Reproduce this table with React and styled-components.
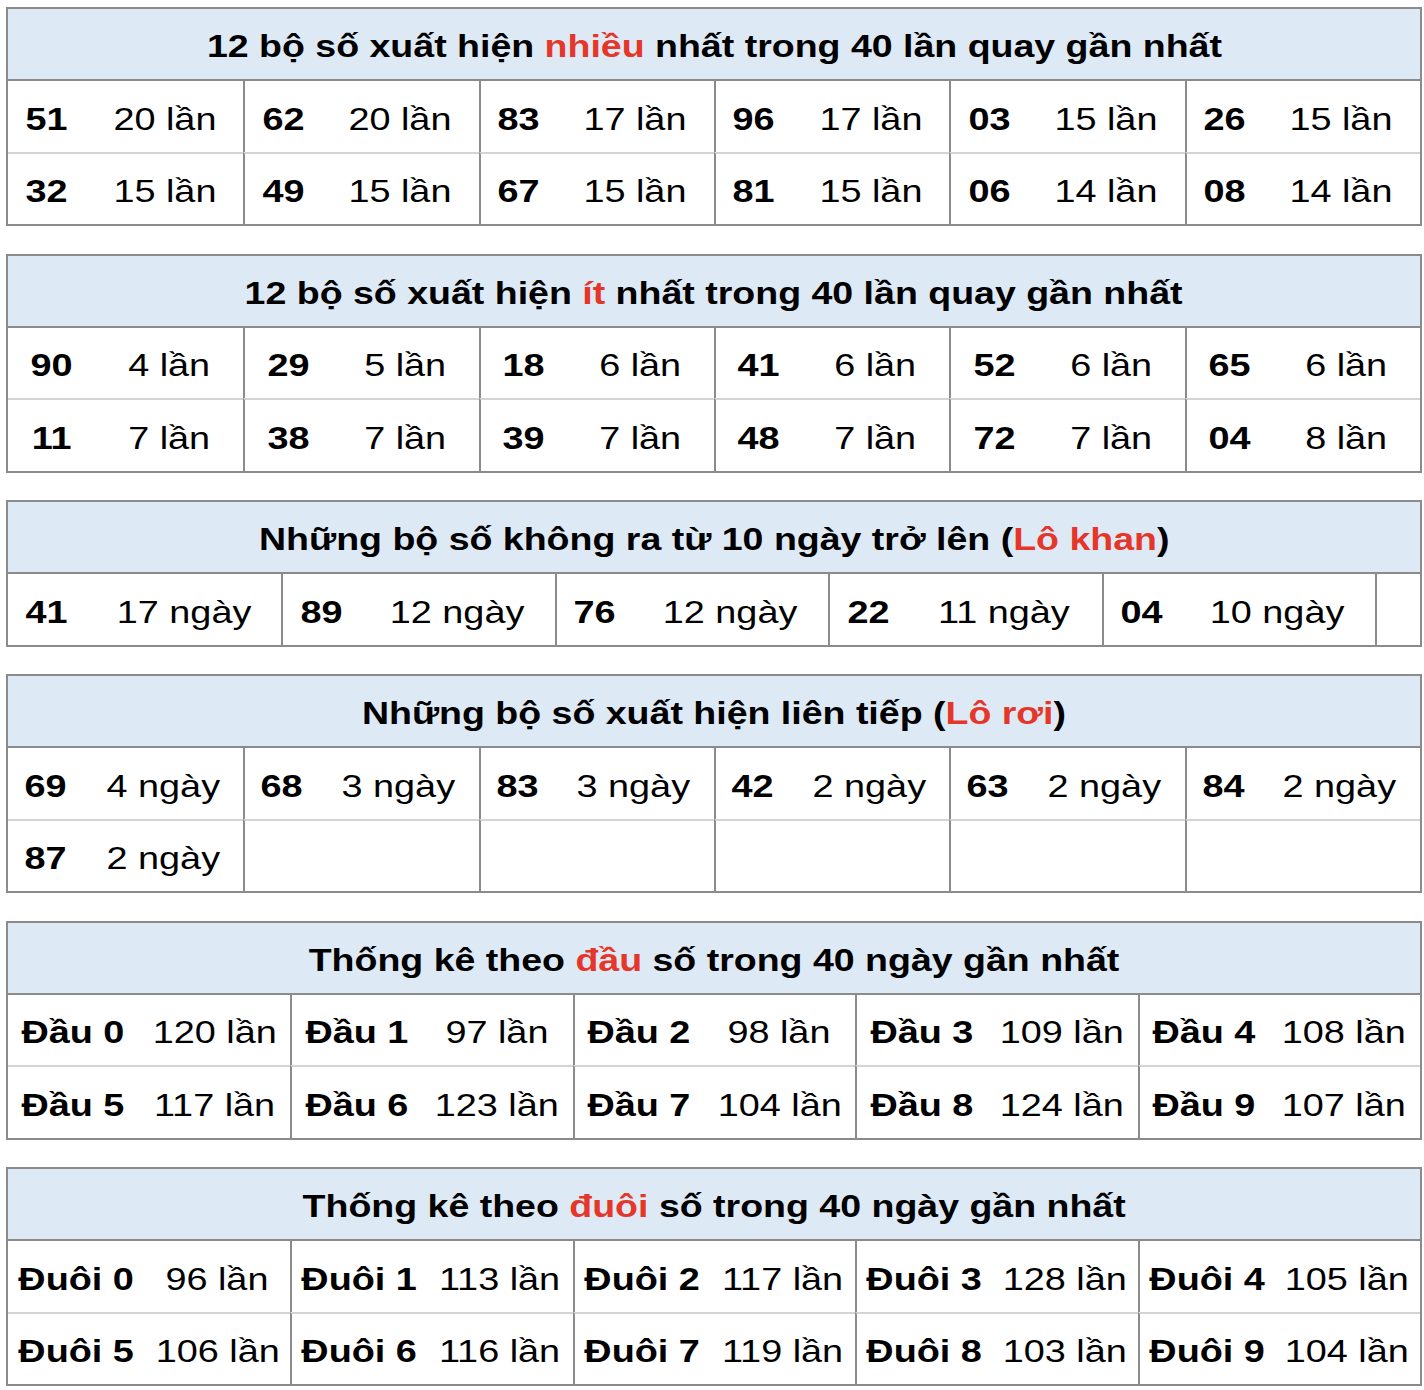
import React from "react";
import styled, { createGlobalStyle } from "styled-components";

const GlobalStyle = createGlobalStyle`
  html, body { margin: 0; padding: 0; background: #ffffff; }
  body {
    font-family: "Liberation Sans", Arial, Helvetica, sans-serif;
    color: #000000;
  }
`;

const Page = styled.div`
  display: flex;
  flex-direction: column;
  gap: 27.5px;
  padding: 7px 2px 4px 6px;
`;

const Table = styled.section`
  border: 2px solid #8b8b8b;
  background: #ffffff;
`;

const Header = styled.div`
  height: 72px;
  box-sizing: border-box;
  padding-top: 6px;
  display: flex;
  align-items: center;
  justify-content: center;
  background: #dde9f5;
  border-bottom: 2px solid #8b8b8b;
  font-size: 31px;
  font-weight: 700;
`;

const Stretch = styled.span`
  display: inline-block;
  white-space: nowrap;
  transform: scaleX(${(p) => p.$scale || 1.2});
  transform-origin: center;
`;

const Hot = styled.span`
  color: #e5362a;
`;

const Grid = styled.div`
  display: grid;
  grid-template-columns: ${(p) => p.$cols};
`;

const Cell = styled.div`
  height: ${(p) => (p.$rowSep ? "72.5px" : "70.5px")};
  padding-top: 6px;
  box-sizing: border-box;
  display: flex;
  align-items: center;
  justify-content: center;
  font-size: 31.5px;
  font-weight: ${(p) => (p.$bold ? 700 : 400)};
  border-left: ${(p) => (p.$divider ? "2px solid #8b8b8b" : "0")};
  border-top: ${(p) => (p.$rowSep ? "2px solid #d4d4d4" : "0")};
`;

const tables = [
  {
    title: ["12 bộ số xuất hiện ", "nhiều", " nhất trong 40 lần quay gần nhất"],
    cols: "repeat(6, 78fr 158fr)",
    pairs: 6,
    rows: [
      [["51", "20 lần"], ["62", "20 lần"], ["83", "17 lần"], ["96", "17 lần"], ["03", "15 lần"], ["26", "15 lần"]],
      [["32", "15 lần"], ["49", "15 lần"], ["67", "15 lần"], ["81", "15 lần"], ["06", "14 lần"], ["08", "14 lần"]],
    ],
  },
  {
    title: ["12 bộ số xuất hiện ", "ít", " nhất trong 40 lần quay gần nhất"],
    cols: "repeat(6, 88fr 148fr)",
    pairs: 6,
    rows: [
      [["90", "4 lần"], ["29", "5 lần"], ["18", "6 lần"], ["41", "6 lần"], ["52", "6 lần"], ["65", "6 lần"]],
      [["11", "7 lần"], ["38", "7 lần"], ["39", "7 lần"], ["48", "7 lần"], ["72", "7 lần"], ["04", "8 lần"]],
    ],
  },
  {
    title: ["Những bộ số không ra từ 10 ngày trở lên (", "Lô khan", ")"],
    cols: "repeat(5, 78fr 196fr) 45fr",
    pairs: 5,
    extra: true,
    rows: [
      [["41", "17 ngày"], ["89", "12 ngày"], ["76", "12 ngày"], ["22", "11 ngày"], ["04", "10 ngày"]],
    ],
  },
  {
    title: ["Những bộ số xuất hiện liên tiếp (", "Lô rơi", ")"],
    cols: "repeat(6, 75fr 161fr)",
    pairs: 6,
    rows: [
      [["69", "4 ngày"], ["68", "3 ngày"], ["83", "3 ngày"], ["42", "2 ngày"], ["63", "2 ngày"], ["84", "2 ngày"]],
      [["87", "2 ngày"]],
    ],
  },
  {
    title: ["Thống kê theo ", "đầu", " số trong 40 ngày gần nhất"],
    cols: "repeat(5, 131fr 152fr)",
    pairs: 5,
    rows: [
      [["Đầu 0", "120 lần"], ["Đầu 1", "97 lần"], ["Đầu 2", "98 lần"], ["Đầu 3", "109 lần"], ["Đầu 4", "108 lần"]],
      [["Đầu 5", "117 lần"], ["Đầu 6", "123 lần"], ["Đầu 7", "104 lần"], ["Đầu 8", "124 lần"], ["Đầu 9", "107 lần"]],
    ],
  },
  {
    title: ["Thống kê theo ", "đuôi", " số trong 40 ngày gần nhất"],
    cols: "repeat(5, 137fr 147fr)",
    pairs: 5,
    rows: [
      [["Đuôi 0", "96 lần"], ["Đuôi 1", "113 lần"], ["Đuôi 2", "117 lần"], ["Đuôi 3", "128 lần"], ["Đuôi 4", "105 lần"]],
      [["Đuôi 5", "106 lần"], ["Đuôi 6", "116 lần"], ["Đuôi 7", "119 lần"], ["Đuôi 8", "103 lần"], ["Đuôi 9", "104 lần"]],
    ],
  },
];

function StatTable({ t }) {
  return (
    <Table>
      <Header>
        <Stretch $scale={1.21}>
          {t.title[0]}
          <Hot>{t.title[1]}</Hot>
          {t.title[2]}
        </Stretch>
      </Header>
      <Grid $cols={t.cols}>
        {t.rows.map((row, ri) => {
          const cells = [];
          for (let i = 0; i < t.pairs; i++) {
            const item = row[i];
            cells.push(
              <Cell key={`n${ri}-${i}`} $bold $divider={i > 0} $rowSep={ri > 0}>
                {item && <Stretch>{item[0]}</Stretch>}
              </Cell>
            );
            cells.push(
              <Cell key={`c${ri}-${i}`} $rowSep={ri > 0}>
                {item && <Stretch>{item[1]}</Stretch>}
              </Cell>
            );
          }
          if (t.extra) {
            cells.push(<Cell key={`x${ri}`} $divider $rowSep={ri > 0} />);
          }
          return cells;
        })}
      </Grid>
    </Table>
  );
}

export default function App() {
  return (
    <>
      <GlobalStyle />
      <Page>
        {tables.map((t, i) => (
          <StatTable key={i} t={t} />
        ))}
      </Page>
    </>
  );
}
